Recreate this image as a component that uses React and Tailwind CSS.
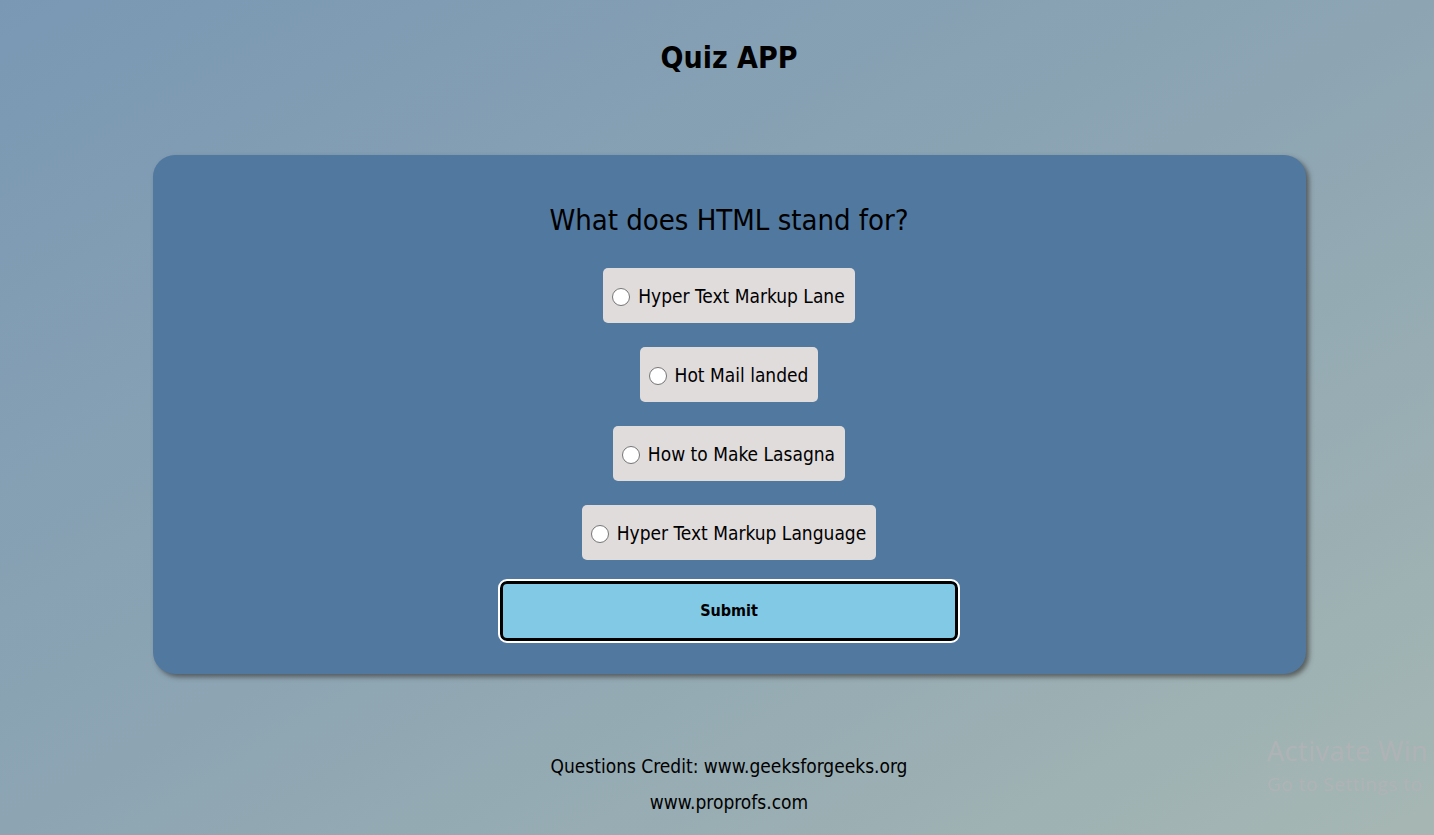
import React, { useState } from "react";

const options = [
  "Hyper Text Markup Lane",
  "Hot Mail landed",
  "How to Make Lasagna",
  "Hyper Text Markup Language",
];

const font = {
  fontFamily: '"Liberation Sans Narrow", "DejaVu Sans Condensed", "Roboto Condensed", "Liberation Sans", sans-serif',
};

const App = () => {
  const [selected, setSelected] = useState(null);

  return (
    <div
      className="relative min-h-[835px] w-full overflow-hidden bg-gradient-to-br from-[#7a98b4] via-[#8da5b3] to-[#a6b7b3] pl-[24px] text-black"
      style={font}
    >
      <h1 className="pt-[36px] text-center text-[30px] font-bold leading-[44px]">
        Quiz APP
      </h1>

      <div className="mx-auto mt-[75px] flex w-[1153px] flex-col items-center rounded-[22px] bg-[#51789f] pt-[43px] pb-[33px] shadow-[3px_3px_5px_rgba(60,60,60,0.7)]">
        <h2 className="text-[29px] leading-[44px]">What does HTML stand for?</h2>

        <div className="mt-[26px] flex flex-col items-center gap-[24px]">
          {options.map((opt, i) => (
            <label
              key={opt}
              className="flex h-[55px] cursor-pointer items-center gap-[8px] rounded-[5px] bg-[#e0dcdc] pl-[9px] pr-[10px] pt-[2px] text-[19px]"
            >
              <input
                type="radio"
                name="answer"
                checked={selected === i}
                onChange={() => setSelected(i)}
                className="m-0 h-[18px] w-[18px] shrink-0 appearance-none rounded-full border border-[#767676] bg-white checked:border-[5px] checked:border-[#0075ff]"
              />
              <span>{opt}</span>
            </label>
          ))}
        </div>

        <button className="mt-[21px] h-[60px] w-[458px] rounded-[7px] border-[3px] border-black bg-[#81c9e4] text-[16px] font-bold outline-2 outline-white">
          Submit
        </button>
      </div>

      <div className="mt-[74px] text-center text-[19px] leading-[36px]">
        <p>Questions Credit: www.geeksforgeeks.org</p>
        <p>www.proprofs.com</p>
      </div>

      <div
        className="pointer-events-none absolute left-[1267px] top-[732px] whitespace-nowrap text-[#b0b3b6]"
        style={{ fontFamily: '"Open Sans", "Noto Sans", sans-serif' }}
      >
        <p className="text-[27px] leading-[38px] tracking-[0.5px]">Activate Win</p>
        <p className="text-[19px] leading-[28px] tracking-[0.5px]">Go to Settings to</p>
      </div>
    </div>
  );
};

export default App;
